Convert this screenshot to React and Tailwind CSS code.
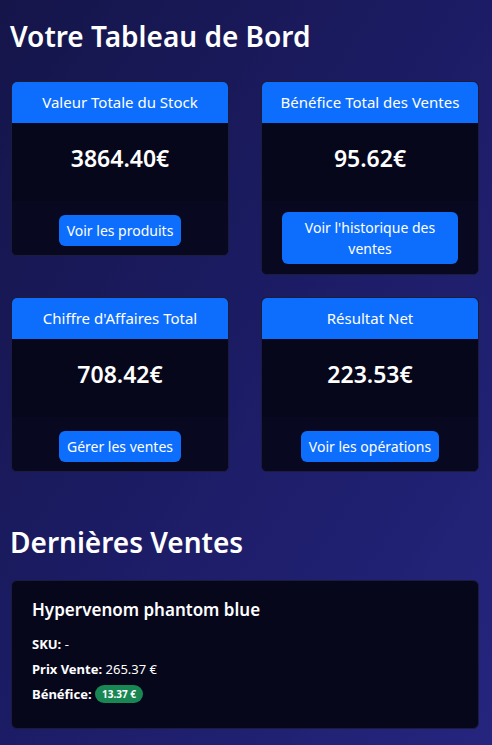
import React from "react";

const stats = [
  { title: "Valeur Totale du Stock", value: "3864.40€", action: "Voir les produits" },
  { title: "Bénéfice Total des Ventes", value: "95.62€", action: "Voir l'historique des ventes", wide: true },
  { title: "Chiffre d'Affaires Total", value: "708.42€", action: "Gérer les ventes" },
  { title: "Résultat Net", value: "223.53€", action: "Voir les opérations" },
];

const StatCard = ({ title, value, action, wide }) => (
  <div className="rounded-md border border-[#1c1c3c] bg-[#07071c] overflow-hidden text-center">
    <div className="bg-[#0d6efd] text-white text-[15px] leading-[25px] py-2 px-3">
      {title}
    </div>
    <div className="h-[78px] pt-[21px]">
      <div className="text-[23px] font-semibold leading-7 text-white">{value}</div>
    </div>
    <div className={wide ? "bg-[#080820] px-5 pt-[11px] pb-[10px]" : "bg-[#080820] px-5 pt-[14px] pb-[9px]"}>
      <button className="bg-[#0d6efd] text-white text-[14px] leading-[21px] rounded-md px-2 py-[5px]">
        {action}
      </button>
    </div>
  </div>
);

const App = () => {
  return (
    <main
      className="min-h-[745px] bg-gradient-to-br from-[#15154a] via-[#1c1c66] to-[#25257f] text-white px-[11px] pt-[18px] pb-5"
      style={{ fontFamily: "'Noto Sans', 'Open Sans', sans-serif" }}
    >
      <h1 className="text-[28px] font-semibold leading-9 mb-[27px] -ml-px">Votre Tableau de Bord</h1>

      {/* Stats */}
      <div className="grid grid-cols-[218px_218px] gap-x-[32px] gap-y-[22px] items-start">
        {stats.map((s) => (
          <StatCard key={s.title} {...s} />
        ))}
      </div>

      {/* Latest sales */}
      <h2 className="text-[28px] font-semibold leading-9 mt-[52px] mb-[20px] -ml-px">Dernières Ventes</h2>
      <div className="w-[468px] rounded-md border border-[#1c1c3c] bg-[#07071c] px-5 pt-[17px] pb-[21px]">
        <h3 className="text-[17px] font-semibold leading-6 mb-[10px]">Hypervenom phantom blue</h3>
        <p className="text-[13px] leading-[25px]">
          <span className="font-bold">SKU:</span> -
        </p>
        <p className="text-[13px] leading-[25px]">
          <span className="font-bold">Prix Vente:</span> 265.37 €
        </p>
        <p className="text-[13px] leading-[25px]">
          <span className="font-bold">Bénéfice:</span>{" "}
          <span className="inline-block bg-[#198754] text-white text-[10px] font-bold leading-none rounded-full px-[7px] py-[4px] align-[1px]">
            13.37 €
          </span>
        </p>
      </div>
    </main>
  );
};

export default App;
